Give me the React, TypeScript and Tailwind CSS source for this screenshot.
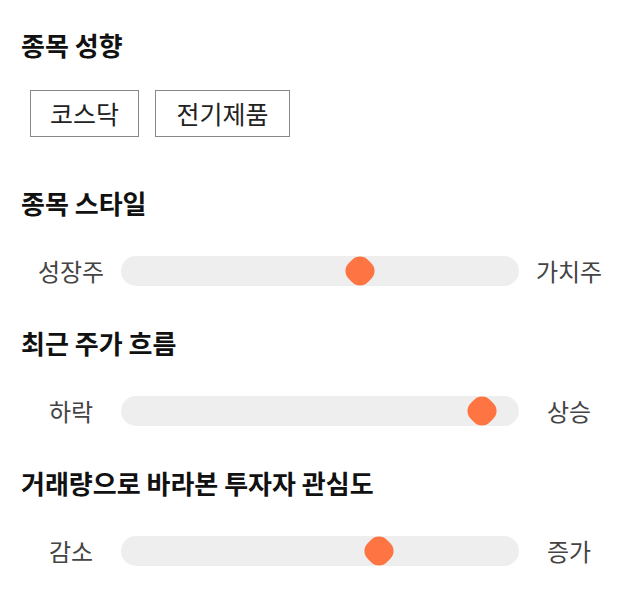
const font = { fontFamily: '"Noto Sans CJK KR", "Noto Sans", sans-serif' };

type Slider = { title: string; left: string; right: string; value: number };

const sliders: Slider[] = [
  { title: "종목 스타일", left: "성장주", right: "가치주", value: 61 },
  { title: "최근 주가 흐름", left: "하락", right: "상승", value: 94 },
  { title: "거래량으로 바라본 투자자 관심도", left: "감소", right: "증가", value: 66 },
];

function Heading({ children }: { children: React.ReactNode }) {
  return <h2 className="text-[26px] leading-[32px] font-bold text-[#111111]">{children}</h2>;
}

function Range({ left, right, value }: Omit<Slider, "title">) {
  return (
    <div className="flex items-center h-[30px]">
      <span className="w-[100px] text-center text-[24px] leading-[30px] text-[#444444]">{left}</span>
      <div className="relative flex-1 h-[30px] rounded-full bg-[#eeeeee]">
        <div
          className="absolute top-1/2 w-[27px] h-[27px] rounded-[11px] bg-[#ff7443] -translate-x-1/2 -translate-y-1/2 rotate-45"
          style={{ left: `calc(15px + (100% - 30px) * ${value / 100})` }}
        />
      </div>
      <span className="w-[100px] text-center text-[24px] leading-[30px] text-[#444444]">{right}</span>
    </div>
  );
}

export default function App() {
  return (
    <div className="w-[640px] h-[606px] bg-white px-[21px] pt-[29px]" style={font}>
      <section>
        <Heading>종목 성향</Heading>
        <div className="flex gap-4 mt-[29px] pl-[9px]">
          <button className="w-[109px] h-[47px] border border-[#888888] text-[25px] text-[#222222]">코스닥</button>
          <button className="w-[135px] h-[47px] border border-[#888888] text-[25px] text-[#222222]">전기제품</button>
        </div>
      </section>
      {sliders.map((s, i) => (
        <section key={s.title} className={i === 0 ? "mt-[50px]" : "mt-[41px]"}>
          <Heading>{s.title}</Heading>
          <div className="mt-[37px]">
            <Range left={s.left} right={s.right} value={s.value} />
          </div>
        </section>
      ))}
    </div>
  );
}
